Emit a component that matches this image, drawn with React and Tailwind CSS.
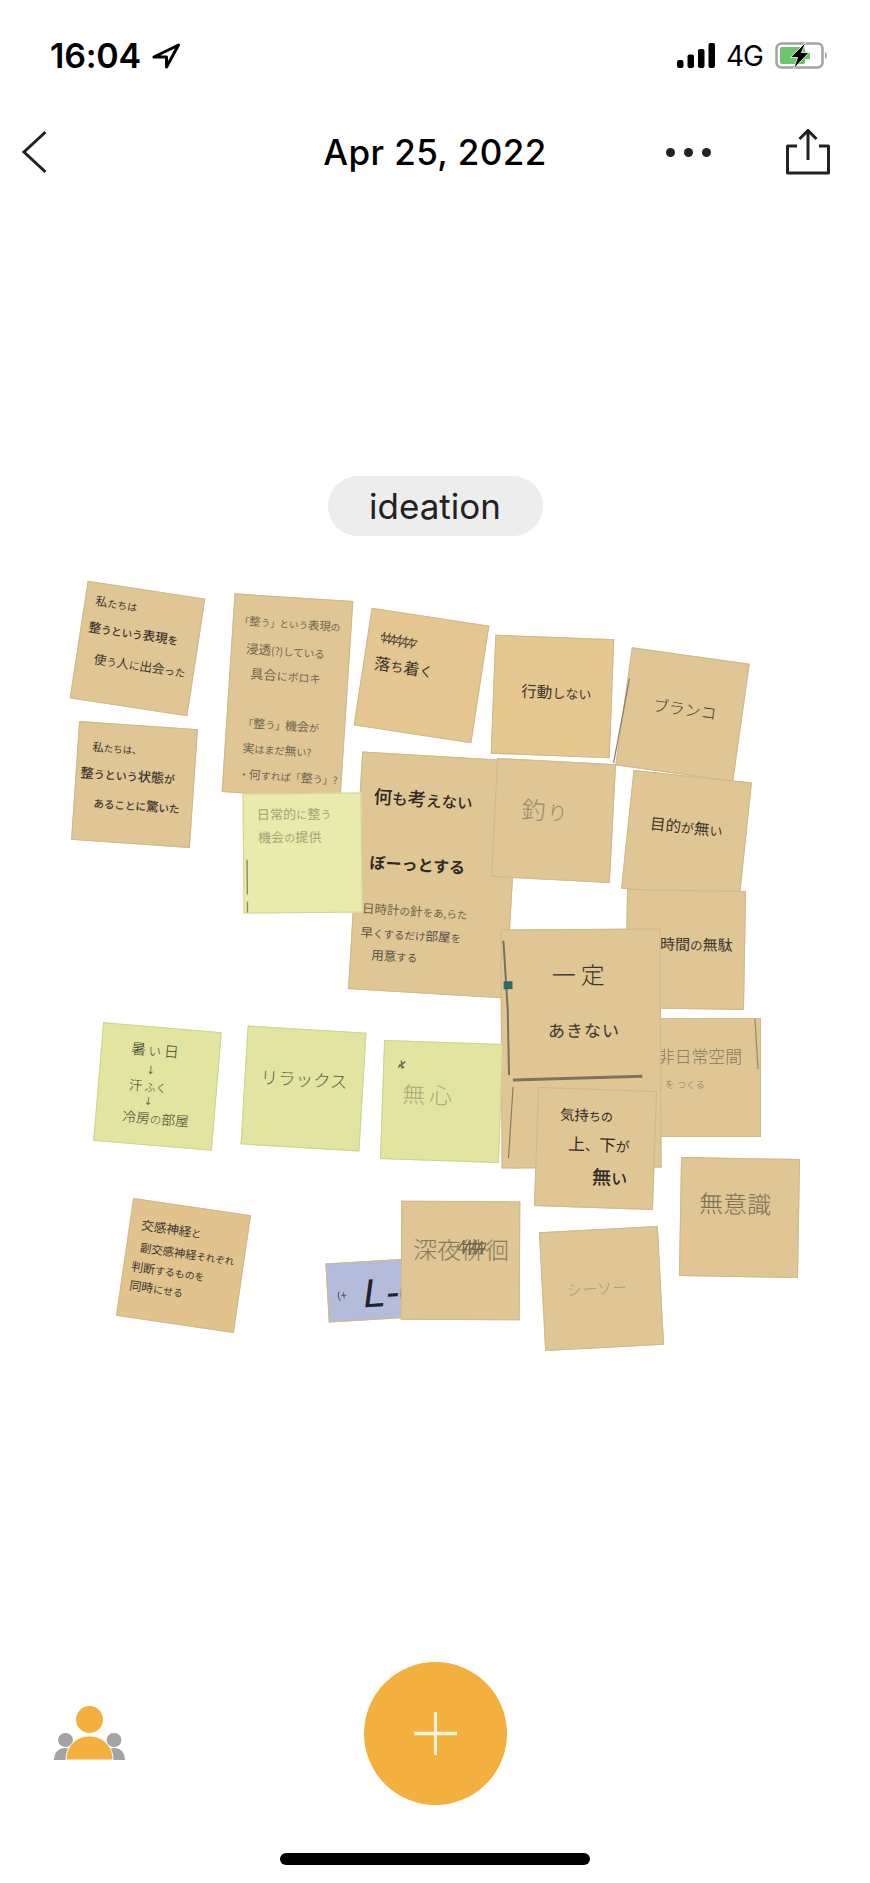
const JP = "font-['Noto_Sans_CJK_JP','Noto_Sans',sans-serif]";

// kanji are written larger than kana on the notes
const Ink = ({ text }) =>
  text.split(/([\u4e00-\u9fff]+)/).map((part, i) =>
    /[\u4e00-\u9fff]/.test(part) ? (
      <span key={i} className="text-[1.2em]">
        {part}
      </span>
    ) : (
      <span key={i}>{part}</span>
    )
  );

const Line = ({ text, className }) => (
  <p className={`self-start whitespace-nowrap leading-none ${className}`}>
    <Ink text={text} />
  </p>
);

const Note = ({ className, children }) => (
  <div className={`absolute flex flex-col border border-[#cfb88c] ${JP} ${className}`}>
    {children}
  </div>
);

const Notes = () => (
  <>
    <Note className="left-[78px] top-[28.5px] h-[119px] w-[119px] rotate-[8.7deg] bg-[#e0c595] pt-[11px] text-[#3c3630]">
      <Line text="私たちは" className="ml-[10px] text-[10px]" />
      <Line text="整うという表現を" className="ml-[7px] mt-[15px] text-[10.5px] font-medium" />
      <Line text="使う人に出会った" className="ml-[17px] mt-[18px] text-[10.5px]" />
    </Note>

    <Note className="left-[74.5px] top-[165px] h-[119px] w-[119px] rotate-[3.9deg] bg-[#e0c595] pt-[18px] text-[#3c3630]">
      <Line text="私たちは、" className="ml-[14px] text-[9.5px]" />
      <Line text="整うという状態が" className="ml-[4px] mt-[13px] text-[11px] font-medium" />
      <Line text="あることに驚いた" className="ml-[19px] mt-[17px] text-[10.5px] font-medium" />
    </Note>

    <Note className="left-[228px] top-[36.5px] h-[199px] w-[119px] rotate-[3.7deg] bg-[#e0c595] pt-[20px] text-[#6f6650]">
      <Line text="「整う」という表現の" className="ml-[6px] text-[9.5px]" />
      <Line text="浸透(?)している" className="ml-[14px] mt-[15px] text-[10.5px]" />
      <Line text="具合にボロキ" className="ml-[20px] mt-[12px] text-[11px]" />
      <Line text="「整う」機会が" className="ml-[16px] mt-[37px] text-[10px]" />
      <Line text="実はまだ無い?" className="ml-[17px] mt-[13px] text-[10px]" />
      <Line text="・何すれば「整う」?" className="ml-[15px] mt-[14px] text-[10px]" />
    </Note>

    <Note className="left-[362px] top-[55.5px] h-[119px] w-[119px] rotate-[8.7deg] bg-[#e6c690] pt-[19px] text-[#3c3630]">
      <svg className="ml-[12px] shrink-0" width="38" height="16" viewBox="0 0 38 16" fill="none" stroke="#5a5346" strokeWidth="1">
        <path d="M1 8 L4 2 L4 12 L9 3 L9 13 L14 3 L14 13 L20 3 L20 14 L26 4 L26 15 L32 4 L32 14 L37 6" />
        <path d="M0 6 L37 6 M1 10 L36 11" />
      </svg>
      <Line text="落ち着く" className="ml-[10px] mt-[9px] text-[13.5px]" />
    </Note>

    <Note className="left-[355px] top-[195.5px] h-[238px] w-[158px] rotate-[3.4deg] bg-[#e0c595] pt-[33px] text-[#2f2a25]">
      <Line text="何も考えない" className="ml-[13px] text-[15.5px] font-medium" />
      <Line text="ぼーっとする" className="ml-[13px] mt-[48px] text-[16px] font-bold" />
      <Line text="日時計の針をあ,らた" className="ml-[8px] mt-[33px] text-[10.5px] text-[#6f6650]" />
      <Line text="早くするだけ部屋を" className="ml-[8px] mt-[12px] text-[10.5px] text-[#5a5346]" />
      <Line text="用意する" className="ml-[20px] mt-[9px] text-[10.5px] text-[#5a5346]" />
    </Note>

    <Note className="left-[243px] top-[232.5px] h-[120px] w-[119px] -rotate-[0.5deg] border-[#d2d49a] bg-[#e8ebab] pt-[13px] text-[#a3a578]">
      <Line text="日常的に整う" className="ml-[13px] text-[11px]" />
      <Line text="機会の提供" className="ml-[14px] mt-[10px] text-[11px]" />
      <svg className="absolute left-0 top-[65px] h-[55px] w-[6px]" viewBox="0 0 6 55" fill="none" stroke="#8b8b70" strokeWidth="1.4">
        <path d="M3 0 L3 35 M3 42 L3 53" />
      </svg>
    </Note>

    <Note className="left-[493px] top-[76.5px] h-[119px] w-[119px] rotate-[2.2deg] bg-[#e6c78f] pl-[27px] pt-[46px] text-[#3c3630]">
      <Line text="行動しない" className="text-[13px]" />
    </Note>

    <Note className="left-[622.5px] top-[94.5px] h-[119px] w-[119px] rotate-[8deg] bg-[#e0c595] pl-[28px] pt-[44px] text-[#3c3630]">
      <Line text="ブランコ" className="text-[16px] font-light" />
      <svg className="absolute -left-[6px] top-[30px] h-[88px] w-[8px]" viewBox="0 0 8 88" fill="none" stroke="#8b7c60" strokeWidth="1.2">
        <path d="M7 0 L3 86" />
      </svg>
    </Note>

    <Note className="left-[494px] top-[200.5px] h-[119px] w-[119px] rotate-[3deg] bg-[#e0c595] pl-[26px] pt-[36px] text-[#968a6c]">
      <Line text="釣り" className="text-[20px] font-light tracking-[2px]" />
    </Note>

    <Note className="left-[627px] top-[215.5px] h-[119px] w-[119px] rotate-[6deg] bg-[#e0c595] pl-[21px] pt-[42px] text-[#3c3630]">
      <Line text="目的が無い" className="text-[13px]" />
    </Note>

    <Note className="left-[626px] top-[329.5px] h-[119px] w-[119px] rotate-[1deg] bg-[#e0c595] pl-[33px] pt-[45px] text-[#3c3630]">
      <Line text="時間の無駄" className="text-[12.5px]" />
    </Note>

    <Note className="left-[642px] top-[458px] h-[119px] w-[119px] bg-[#e0c595] pl-[15px] pt-[29px] text-[#85795f]">
      <Line text="非日常空間" className="text-[14px] font-light" />
      <Line text="を つくる" className="ml-[7px] mt-[15px] text-[9.5px] font-light" />
      <svg className="absolute right-0 top-0 h-[52px] w-[6px]" viewBox="0 0 6 52" fill="none" stroke="#97896c" strokeWidth="1.2">
        <path d="M1 0 L4 50" />
      </svg>
    </Note>

    <Note className="left-[501px] top-[368.5px] h-[239px] w-[160px] -rotate-[0.3deg] bg-[#e0c595] pt-[32px] text-[#3c3630]">
      <Line text="一定" className="ml-[50px] text-[20px] font-light tracking-[5px]" />
      <Line text="あきない" className="ml-[46px] mt-[35px] text-[17px] tracking-[1px]" />
      <svg className="absolute inset-0 h-full w-full" viewBox="0 0 160 239" fill="none">
        <path d="M2 10 L6 80 L7 146" stroke="#77705f" strokeWidth="2" />
        <rect x="2" y="51" width="9" height="8" fill="#2f6a68" />
        <path d="M11 151 L142 148" stroke="#80735c" strokeWidth="3" />
        <path d="M11 158 L6 230" stroke="#8b7c60" strokeWidth="1.2" />
      </svg>
    </Note>

    <Note className="left-[381.5px] top-[482px] h-[119px] w-[119px] rotate-[2deg] border-[#cfd197] bg-[#e2e4a0] pl-[13px] pt-[18px] text-[#a9a97a]">
      <svg className="shrink-0" width="10" height="10" viewBox="0 0 10 10" fill="none" stroke="#6f6f50" strokeWidth="1.6">
        <path d="M1 8 L8 2 M2 5 L7 8 M4 1 L5 9" />
      </svg>
      <Line text="無 心" className="ml-[6px] mt-[13px] text-[19px] font-light" />
    </Note>

    <Note className="left-[536px] top-[528.5px] h-[119px] w-[119px] rotate-[2deg] bg-[#e0c595] pt-[18px] text-[#2f2a25]">
      <Line text="気持ちの" className="ml-[22px] text-[12px]" />
      <Line text="上、下が" className="ml-[31px] mt-[14px] text-[14px]" />
      <Line text="無い" className="ml-[56px] mt-[14px] text-[16px] font-medium" />
    </Note>

    <Note className="left-[680px] top-[598px] h-[119px] w-[119px] rotate-[1deg] bg-[#e0c595] pl-[18px] pt-[32px] text-[#7a6f58]">
      <Line text="無意識" className="text-[20px] font-light" />
    </Note>

    <Note className="left-[542px] top-[669px] h-[119px] w-[119px] -rotate-[3deg] bg-[#e0c595] pl-[24px] pt-[50px] text-[#a2957a]">
      <Line text="シーソー" className="text-[15px] font-light" />
    </Note>

    <Note className="left-[326.5px] top-[699.5px] h-[59px] w-[119px] -rotate-[3.3deg] border-[#a9b3d0] bg-[#b3bcdb] pl-[35px] pt-[11px] text-[#1f2230]">
      <Line text="L-0" className="font-['Liberation_Sans',sans-serif] text-[40px] italic" />
      <svg className="absolute left-[9px] top-[26px]" width="11" height="12" viewBox="0 0 11 12" fill="none" stroke="#4d5368" strokeWidth="1">
        <path d="M2 2 C0 5 1 9 3 11 M4 6 L9 6 M6 3 L7 9" />
      </svg>
    </Note>

    <Note className="left-[401px] top-[640.5px] h-[119px] w-[119px] rotate-[0.3deg] bg-[#e0c595] pl-[11px] pt-[35px] text-[#85795f]">
      <Line text="深夜徘徊" className="text-[20px] font-light" />
      <svg className="absolute left-[55px] top-[36px]" width="30" height="18" viewBox="0 0 30 18" fill="none" stroke="#6f6650" strokeWidth="1.2">
        <path d="M1 12 L7 2 L6 16 L13 2 L12 17 L19 2 L18 17 L25 3 L24 16 L29 6 M0 7 L29 5 M1 12 L29 11" />
      </svg>
    </Note>

    <Note className="left-[98px] top-[466.5px] h-[119px] w-[119px] rotate-[4.8deg] border-[#cfd197] bg-[#e2e4a0] pt-[14px] text-[#3c3c2e]">
      <Line text="暑 い 日" className="ml-[29px] text-[12.5px] font-light" />
      <Line text="↓" className="ml-[46px] mt-[8px] text-[9px]" />
      <Line text="汗 ふく" className="ml-[30px] mt-[5px] text-[11px] font-light" />
      <Line text="↓" className="ml-[46px] mt-[4px] text-[9px]" />
      <Line text="冷房の部屋" className="ml-[26px] mt-[6px] text-[11.5px] font-light" />
    </Note>

    <Note className="left-[243.5px] top-[468.5px] h-[119px] w-[119px] rotate-[3.4deg] border-[#cfd197] bg-[#e2e4a0] pl-[15px] pt-[40px] text-[#5f5f46]">
      <Line text="リラックス" className="text-[17.5px] font-light" />
    </Note>

    <Note className="left-[124px] top-[645.5px] h-[119px] w-[119px] rotate-[8.3deg] bg-[#e2c38e] pt-[18px] text-[#3c3630]">
      <Line text="交感神経と" className="ml-[11px] text-[10.5px]" />
      <Line text="副交感神経それぞれ" className="ml-[13px] mt-[10px] text-[9.5px]" />
      <Line text="判断するものを" className="ml-[7px] mt-[8px] text-[10px]" />
      <Line text="同時にせる" className="ml-[8px] mt-[7px] text-[10px]" />
    </Note>
  </>
);

const StatusBar = () => (
  <div className="flex h-[111px] items-center justify-between pl-[50px] pr-[41px] font-['Inter',sans-serif] text-black">
    <div className="flex items-center gap-[11px]">
      <span className="text-[34px] font-semibold leading-none tracking-[-0.2px]">16:04</span>
      <svg width="29" height="26" viewBox="0 0 29 26" fill="none" stroke="black" strokeWidth="3" strokeLinejoin="round">
        <path d="M26.5 2 L2 14 L14.5 14 L14.5 24 Z" />
      </svg>
    </div>
    <div className="flex items-center">
      <svg width="38" height="25" viewBox="0 0 38 25" fill="black">
        <rect x="0" y="17" width="6.5" height="8" rx="2" />
        <rect x="10.5" y="11.5" width="6.5" height="13.5" rx="2" />
        <rect x="21" y="6" width="6.5" height="19" rx="2" />
        <rect x="31.5" y="0" width="6.5" height="25" rx="2" />
      </svg>
      <span className="ml-[11px] text-[28px] leading-none tracking-[-1px]">4G</span>
      <svg className="ml-[12px]" width="54" height="27" viewBox="0 0 54 27" fill="none">
        <rect x="1.5" y="1.5" width="46" height="24" rx="5" stroke="#a3a3a3" strokeWidth="2.5" />
        <rect x="5" y="5" width="25" height="17" rx="2" fill="#6cc56c" />
        <rect x="30" y="11" width="5" height="6" fill="#6cc56c" />
        <path d="M50 10 C52.5 11 52.5 16 50 17 Z" fill="#a3a3a3" />
        <path d="M31 0 L15.5 15.5 L22.5 15.5 L18.5 27 L34 10.5 L26.5 10.5 Z" fill="black" stroke="white" strokeWidth="0.8" />
      </svg>
    </div>
  </div>
);

const NavBar = () => (
  <div className="grid h-[82px] grid-cols-[1fr_auto_1fr] items-center px-[21px] font-['Inter',sans-serif]">
    <svg width="26" height="44" viewBox="0 0 26 44" fill="none" stroke="#222" strokeWidth="3">
      <path d="M24.5 2 L3 22 L24.5 42" />
    </svg>
    <h1 className="text-[35px] font-medium leading-none tracking-[0.4px] text-black">Apr 25, 2022</h1>
    <div className="flex items-center justify-end gap-[75px] pr-[19px]">
      <div className="flex gap-[9px]">
        <span className="h-[9px] w-[9px] rounded-full bg-[#222]" />
        <span className="h-[9px] w-[9px] rounded-full bg-[#222]" />
        <span className="h-[9px] w-[9px] rounded-full bg-[#222]" />
      </div>
      <svg width="44" height="46" viewBox="0 0 44 46" fill="none" stroke="#222" strokeWidth="3">
        <path d="M11 17 L1.5 17 L1.5 44 L42.5 44 L42.5 17 L33 17" strokeLinejoin="round" />
        <path d="M22 31 L22 2 M13.5 10 L22 1.5 L30.5 10" />
      </svg>
    </div>
  </div>
);

const BottomBar = () => (
  <div className="grid grid-cols-[1fr_143px_1fr]">
    <svg className="ml-[54px] mt-[44px]" width="72" height="54" viewBox="0 0 72 54" fill="#a3a3a3">
      <ellipse cx="11.5" cy="34" rx="7.5" ry="7" />
      <ellipse cx="60" cy="34" rx="7.5" ry="7" />
      <path d="M0 54 C0 46 5 42 11 42 C16 42 20 46 22 54 Z" />
      <path d="M71 54 C71 46 66 42 60 42 C55 42 51 46 49 54 Z" />
      <ellipse cx="35.5" cy="13.5" rx="13.5" ry="13.5" fill="#f3b03f" />
      <path d="M12 54 C12 40 22 30 35.5 30 C49 30 59 40 59 54 Z" fill="#f3b03f" stroke="white" strokeWidth="1" />
    </svg>
    <button className="flex h-[143px] w-[143px] items-center justify-center rounded-full bg-[#f3b03f]">
      <svg width="43" height="43" viewBox="0 0 43 43" stroke="#fff3dc">
        <path d="M0 21.5 L43 21.5" strokeWidth="3.5" />
        <path d="M21.5 0 L21.5 43" strokeWidth="3" />
      </svg>
    </button>
  </div>
);

export default function App() {
  return (
    <div className="flex h-[1883px] w-[870px] flex-col overflow-hidden bg-white">
      <StatusBar />
      <NavBar />

      <div className="mt-[283px] flex justify-center">
        <div className="flex h-[60px] w-[215px] items-center justify-center rounded-full bg-[#ededed] font-['Inter',sans-serif] text-[35px] text-[#222]">
          ideation
        </div>
      </div>

      {/* free canvas, the notes sit where the user dropped them */}
      <div className="relative mt-[24px] flex-1">
        <Notes />
      </div>

      <BottomBar />

      <div className="flex justify-center pb-[18px] pt-[48px]">
        <div className="h-[12px] w-[310px] rounded-[6px] bg-black" />
      </div>
    </div>
  );
}
